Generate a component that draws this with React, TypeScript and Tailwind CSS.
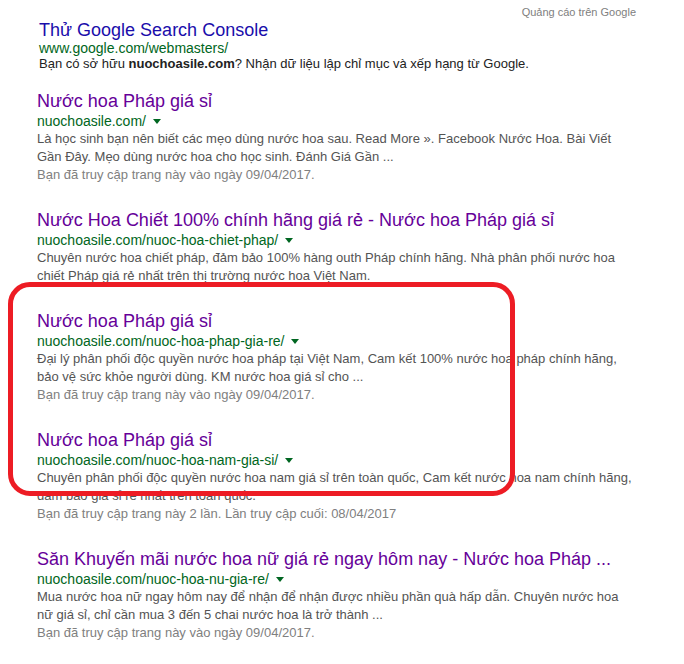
type Result = {
  title: string;
  url: string;
  lines: string[];
  visited: string;
};

const results: Result[] = [
  {
    title: "Nước hoa Pháp giá sỉ",
    url: "nuochoasile.com/",
    lines: [
      "Là học sinh bạn nên biết các mẹo dùng nước hoa sau. Read More ». Facebook Nước Hoa. Bài Viết",
      "Gần Đây. Mẹo dùng nước hoa cho học sinh. Đánh Giá Gần ...",
    ],
    visited: "Bạn đã truy cập trang này vào ngày 09/04/2017.",
  },
  {
    title: "Nước Hoa Chiết 100% chính hãng giá rẻ - Nước hoa Pháp giá sỉ",
    url: "nuochoasile.com/nuoc-hoa-chiet-phap/",
    lines: [
      "Chuyên nước hoa chiết pháp, đảm bảo 100% hàng outh Pháp chính hãng. Nhà phân phối nước hoa",
      "chiết Pháp giá rẻ nhất trên thị trường nước hoa Việt Nam.",
    ],
    visited: "",
  },
  {
    title: "Nước hoa Pháp giá sỉ",
    url: "nuochoasile.com/nuoc-hoa-phap-gia-re/",
    lines: [
      "Đại lý phân phối độc quyền nước hoa pháp tại Việt Nam, Cam kết 100% nước hoa pháp chính hãng,",
      "bảo vệ sức khỏe người dùng. KM nước hoa giá sỉ cho ...",
    ],
    visited: "Bạn đã truy cập trang này vào ngày 09/04/2017.",
  },
  {
    title: "Nước hoa Pháp giá sỉ",
    url: "nuochoasile.com/nuoc-hoa-nam-gia-si/",
    lines: [
      "Chuyên phân phối độc quyền nước hoa nam giá sỉ trên toàn quốc, Cam kết nước hoa nam chính hãng,",
      "đảm bảo giá sỉ rẻ nhất trên toàn quốc.",
    ],
    visited: "Bạn đã truy cập trang này 2 lần. Lần truy cập cuối: 08/04/2017",
  },
  {
    title: "Săn Khuyến mãi nước hoa nữ giá rẻ ngay hôm nay - Nước hoa Pháp ...",
    url: "nuochoasile.com/nuoc-hoa-nu-gia-re/",
    lines: [
      "Mua nước hoa nữ ngay hôm nay để nhận để nhận được nhiều phần quà hấp dẫn. Chuyên nước hoa",
      "nữ giá sỉ, chỉ cần mua 3 đến 5 chai nước hoa là trở thành ...",
    ],
    visited: "Bạn đã truy cập trang này vào ngày 09/04/2017.",
  },
];

function Arrow() {
  return (
    <span className="inline-block ml-[7px] mb-[2px] align-middle w-0 h-0 border-x-[4px] border-x-transparent border-t-[5px] border-t-[#006621]" />
  );
}

function ResultItem({ r }: { r: Result }) {
  return (
    <div>
      <div className="text-[18px] leading-[22px] text-[#660099] whitespace-nowrap">{r.title}</div>
      <div className="text-[14px] leading-[18px] text-[#006621] whitespace-nowrap">
        {r.url}
        <Arrow />
      </div>
      <div className="text-[13px] leading-[18px] text-[#545454]">
        {r.lines.map((l, i) => (
          <div key={i} className="whitespace-nowrap">{l}</div>
        ))}
        {r.visited && <div className="text-[#808080] whitespace-nowrap">{r.visited}</div>}
      </div>
    </div>
  );
}

export default function App() {
  return (
    <div className="relative w-full h-[664px] bg-white overflow-hidden font-['Liberation_Sans',Arial,sans-serif]">
      <div className="flex justify-end pr-[48px] pt-[4px] text-[11px] leading-[16px] text-[#808080]">
        Quảng cáo trên Google
      </div>

      <div className="pl-[39px]">
        <div className="text-[18px] leading-[20px] text-[#1a0dab]">Thử Google Search Console</div>
        <div className="text-[14px] leading-[16px] text-[#006621]">www.google.com/webmasters/</div>
        <div className="text-[13px] leading-[16px] text-[#222222]">
          Bạn có sở hữu <b>nuochoasile.com</b>? Nhận dữ liệu lập chỉ mục và xếp hạng từ Google.
        </div>
      </div>

      <div className="pl-[37px] mt-[18px] flex flex-col gap-[25px]">
        {results.map((r, i) => (
          <ResultItem key={i} r={r} />
        ))}
      </div>

      <div className="absolute left-[8px] top-[282px] w-[507px] h-[214px] border-[5px] border-[#ed1c24] rounded-[22px] pointer-events-none" />
    </div>
  );
}
